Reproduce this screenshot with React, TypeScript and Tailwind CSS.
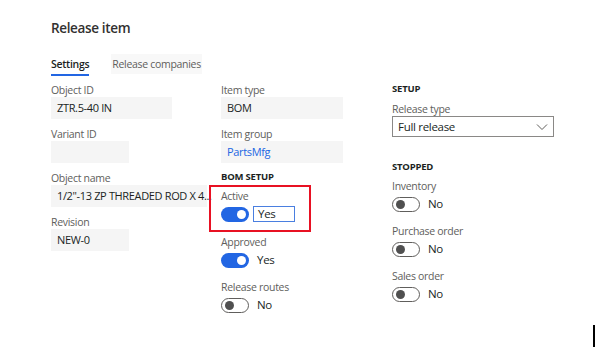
import React from 'react'

const font = { fontFamily: '"Open Sans", "Noto Sans", Arial, sans-serif' }

function Label({ children }: { children: React.ReactNode }) {
  return <div className="h-[14px] text-[10.5px] leading-[14px] tracking-[-0.3px] text-[#605e5c]">{children}</div>
}

function Field({ label, value, w, blue }: { label: string; value?: string; w: string; blue?: boolean }) {
  return (
    <div className="mb-2">
      <Label>{label}</Label>
      <div
        className={`${w} h-[22px] bg-[#f5f5f5] px-[6px] text-[11px] leading-[22px] tracking-[-0.35px] whitespace-nowrap ${
          blue ? 'text-[#2266e3]' : 'text-[#201f1e]'
        }`}
      >
        {value}
      </div>
    </div>
  )
}

function Toggle({ on }: { on: boolean }) {
  return on ? (
    <div className="w-[28px] h-[15px] rounded-full bg-[#2266e3] flex items-center justify-end pr-[3px]">
      <div className="w-[9px] h-[9px] rounded-full bg-white" />
    </div>
  ) : (
    <div className="w-[28px] h-[15px] rounded-full border border-[#605e5c] bg-white flex items-center pl-[3px]">
      <div className="w-[9px] h-[9px] rounded-full bg-[#505050]" />
    </div>
  )
}

function ToggleField({ label, on, boxed, gap = 'mb-[13px]' }: { label: string; on: boolean; boxed?: boolean; gap?: string }) {
  return (
    <div className={gap}>
      <Label>{label}</Label>
      <div className="mt-[3px] h-[16px] flex items-center text-[11.5px] tracking-[-0.3px] text-[#201f1e]">
        <Toggle on={on} />
        {boxed ? (
          <div className="ml-[4px] w-[42px] h-[16px] border border-[#4a7fe0] pl-[4px] leading-[14px]">Yes</div>
        ) : (
          <span className="ml-[8px]">{on ? 'Yes' : 'No'}</span>
        )}
      </div>
    </div>
  )
}

function Section({ children, className }: { children: React.ReactNode; className?: string }) {
  return (
    <div className={`h-[14px] text-[9.5px] leading-[14px] tracking-[-0.2px] font-bold text-[#201f1e] ${className ?? ''}`}>
      {children}
    </div>
  )
}

export default function App() {
  return (
    <div style={font} className="relative w-[610px] h-[347px] bg-white overflow-hidden pl-[51px] pt-[18px]">
      <h1 className="text-[13.5px] leading-[20px] tracking-[-0.35px] font-semibold text-[#323130]">Release item</h1>

      <div className="mt-[16px] flex items-start text-[10.5px] tracking-[-0.3px]">
        <div className="flex flex-col">
          <span className="h-[20px] leading-[20px] font-semibold text-[#201f1e]">Settings</span>
          <div className="h-[2px] bg-[#2266e3]" />
        </div>
        <span className="ml-[22px] h-[20px] leading-[20px] px-[1px] bg-[#f8f8f8] text-[#605e5c]">Release companies</span>
      </div>

      <div className="mt-[7px] grid grid-cols-[170px_171px_200px]">
        <div>
          <Field label="Object ID" value="ZTR.5-40 IN" w="w-[121px]" />
          <Field label="Variant ID" w="w-[78px]" />
          <Field label="Object name" value={'1/2"-13 ZP THREADED ROD X 4...'} w="w-[156px]" />
          <Field label="Revision" value="NEW-0" w="w-[78px]" />
        </div>

        <div>
          <Field label="Item type" value="BOM" w="w-[122px]" />
          <Field label="Item group" value="PartsMfg" w="w-[122px]" blue />
          <Section className="mt-[-1px] mb-[5px]">BOM SETUP</Section>
          <ToggleField label="Active" on boxed />
          <ToggleField label="Approved" on gap="mb-[12px]" />
          <ToggleField label="Release routes" on={false} />
        </div>

        <div className="-mt-[1px]">
          <Section className="mb-[6px]">SETUP</Section>
          <Label>Release type</Label>
          <div className="w-[162px] h-[21px] border border-[#8a8886] flex items-center justify-between pl-[5px] pr-[5px] text-[11.5px] tracking-[-0.3px] text-[#201f1e]">
            <span>Full release</span>
            <svg width="12" height="8" viewBox="0 0 12 8" fill="none" stroke="#605e5c" strokeWidth="1">
              <path d="M1 1.5 L6 6.5 L11 1.5" />
            </svg>
          </div>
          <Section className="mt-[23px] mb-[5px]">STOPPED</Section>
          <ToggleField label="Inventory" on={false} gap="mb-[12px]" />
          <ToggleField label="Purchase order" on={false} gap="mb-[12px]" />
          <ToggleField label="Sales order" on={false} />
        </div>
      </div>

      <div className="absolute left-[209px] top-[185px] w-[102px] h-[47px] border-2 border-[#e81123]" />
      <div className="absolute left-[593px] top-[325px] w-[2px] h-[22px] bg-black" />
    </div>
  )
}
